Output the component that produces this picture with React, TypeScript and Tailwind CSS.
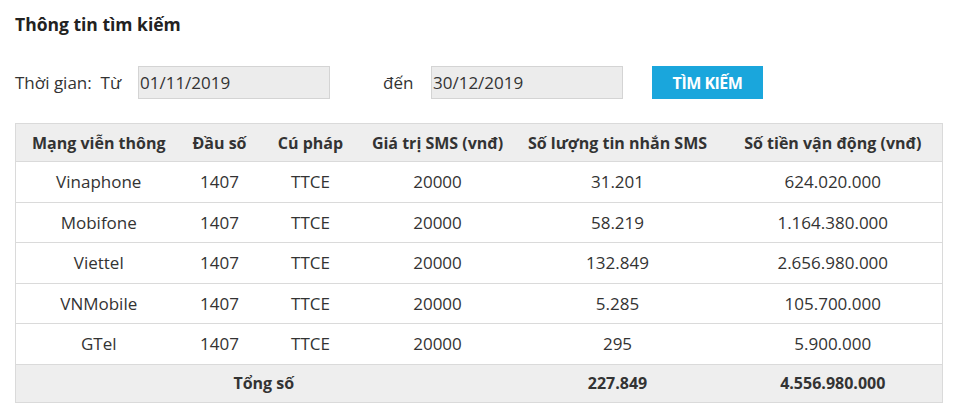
const ROWS = [
  { net: "Vinaphone", count: "31.201", amount: "624.020.000" },
  { net: "Mobifone", count: "58.219", amount: "1.164.380.000" },
  { net: "Viettel", count: "132.849", amount: "2.656.980.000" },
  { net: "VNMobile", count: "5.285", amount: "105.700.000" },
  { net: "GTel", count: "295", amount: "5.900.000" },
];

const HEADERS = [
  "Mạng viễn thông",
  "Đầu số",
  "Cú pháp",
  "Giá trị SMS (vnđ)",
  "Số lượng tin nhắn SMS",
  "Số tiền vận động (vnđ)",
];

export default function App() {
  return (
    <div className="w-[960px] h-[420px] bg-white text-[#333] font-['Open_Sans',sans-serif] px-[15px] pt-[12px]">
      <h2 className="text-[17.5px] font-bold leading-[24px] text-[#222]">Thông tin tìm kiếm</h2>

      <div className="flex items-center mt-[30px] h-[33px] text-[17px]">
        <span className="w-[123px]">Thời gian:&nbsp; Từ</span>
        <div className="w-[192px] h-[33px] bg-[#ececec] border border-[#d4d4d4] flex items-center px-[1px]">
          01/11/2019
        </div>
        <span className="ml-[53px] w-[48px]">đến</span>
        <div className="w-[192px] h-[33px] bg-[#ececec] border border-[#d4d4d4] flex items-center px-[1px]">
          30/12/2019
        </div>
        <button
          type="button"
          className="ml-[29px] w-[111px] h-[33px] bg-[#1aa6dc] text-white font-bold text-[16px] tracking-[-0.5px]"
        >
          TÌM KIẾM
        </button>
      </div>

      <table className="mt-[24px] w-[927px] border-collapse border border-[#dadada] text-[17px] table-fixed">
        <colgroup>
          <col className="w-[166px]" />
          <col className="w-[76px]" />
          <col className="w-[106px]" />
          <col className="w-[148px]" />
          <col className="w-[212px]" />
          <col className="w-[219px]" />
        </colgroup>
        <thead>
          <tr className="bg-[#eeeeee] h-[38px]">
            {HEADERS.map((h) => (
              <th key={h} className="font-bold text-[16px] text-[#333] text-center">
                {h}
              </th>
            ))}
          </tr>
        </thead>
        <tbody>
          {ROWS.map((r) => (
            <tr key={r.net} className="h-[40.6px] border-t border-[#dadada]">
              <td className="text-center">{r.net}</td>
              <td className="text-center">1407</td>
              <td className="text-center">TTCE</td>
              <td className="text-center">20000</td>
              <td className="text-center">{r.count}</td>
              <td className="text-center">{r.amount}</td>
            </tr>
          ))}
          <tr className="bg-[#eeeeee] h-[38px] border-t border-[#dadada] font-bold text-[16px]">
            <td colSpan={4} className="text-center">Tổng số</td>
            <td className="text-center">227.849</td>
            <td className="text-center">4.556.980.000</td>
          </tr>
        </tbody>
      </table>
    </div>
  );
}
